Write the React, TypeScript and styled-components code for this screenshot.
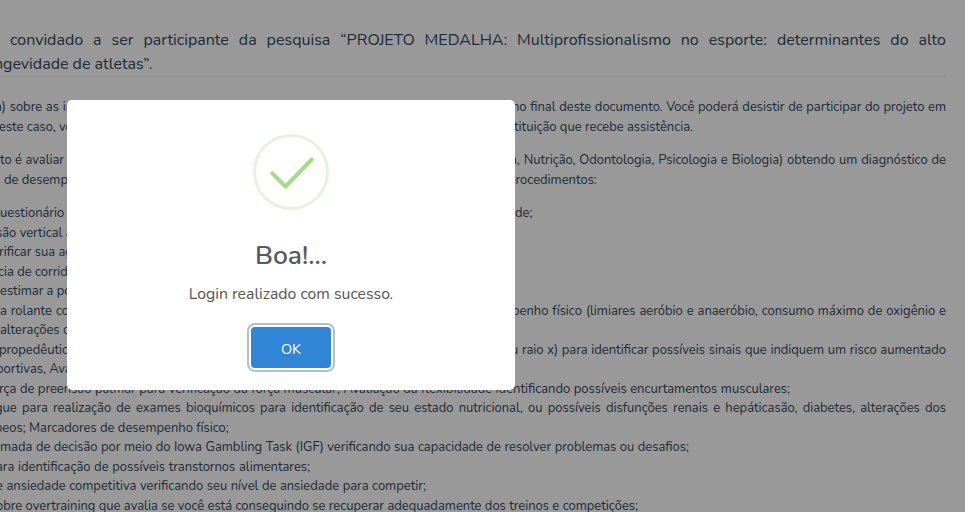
import React from "react";
import styled, { createGlobalStyle } from "styled-components";

const GlobalStyle = createGlobalStyle`
  html, body { margin: 0; height: 512px; overflow: hidden; background: #fff; }
  body { font-family: Nunito, Lato, sans-serif; color: #34495e; }
  * { box-sizing: border-box; }
`;

const Page = styled.main`
  width: 965px;
  height: 512px;
  padding-top: 28px;
  overflow: hidden;
`;

const Heading = styled.header`
  width: 946px;
  height: 49px;
  font-size: 16px;
  line-height: 24px;
  border-bottom: 1px solid #f0f0f0;
`;

const Block = styled.section<{ $gap: number }>`
  margin-top: ${(p) => p.$gap}px;
  font-size: 12.96px;
  line-height: 19.5px;
`;

const Line = styled.div`
  display: flex;
  height: 1lh;
`;

const Run = styled.span<{ $indent: number; $width: number }>`
  flex: none;
  margin-left: ${(p) => p.$indent}px;
  width: ${(p) => p.$width}px;
  white-space: nowrap;
  text-align: justify;
  text-align-last: justify;
`;

const Backdrop = styled.div`
  position: fixed;
  inset: 0;
  display: flex;
  align-items: flex-start;
  padding: 100px 0 0 67px;
  background: rgba(0, 0, 0, 0.4);
`;

const Dialog = styled.div`
  display: flex;
  flex-direction: column;
  align-items: center;
  width: 448px;
  height: 290px;
  padding-top: 34px;
  border-radius: 5px;
  background: #fff;
`;

const SuccessMark = styled.svg`
  display: block;
  width: 76px;
  height: 76px;
`;

const Title = styled.h2`
  margin: 28px 0 0;
  font-size: 26.4px;
  line-height: 34px;
  font-weight: 600;
  color: #595959;
`;

const Message = styled.p`
  margin: 10px 0 0;
  font-size: 15.8px;
  line-height: 24px;
  color: #545454;
`;

const Confirm = styled.button`
  width: 80px;
  height: 41px;
  margin-top: 21px;
  padding: 2px 0 0;
  border: 0;
  border-radius: 4px;
  background: #3085d6;
  box-shadow: 0 0 0 2px #fff, 0 0 0 4px rgba(50, 100, 150, 0.4);
  color: #fff;
  font: 14.5px Nunito, Lato, sans-serif;
`;

type Segment = [start: number, end: number, text: string];

const heading: Segment[][] = [
  [[10, 946, "convidado a ser participante da pesquisa “PROJETO MEDALHA: Multiprofissionalismo no esporte: determinantes do alto"]],
  [[-6, 152, "ngevidade de atletas”."]],
];

const intro: Segment[][] = [
  [[-5, 73, "a) sobre as in"], [512, 946, "no final deste documento. Você poderá desistir de participar do projeto em"]],
  [[-1, 71, "este caso, vo"], [514, 693, "tituição que recebe assistência."]],
];

const goal: Segment[][] = [
  [[0, 64, "to é avaliar"], [510, 946, "a, Nutrição, Odontologia, Psicologia e Biologia) obtendo um diagnóstico de"]],
  [[4, 67, "de desemp"], [508, 597, "procedimentos:"]],
];

const procedures: Segment[][] = [
  [[0, 63, "uestionário"], [515, 532, "de;"]],
  [[-4, 72, "são vertical a"]],
  [[-1, 69, "rificar sua ag"]],
  [[-2, 67, "cia de corrid"]],
  [[0, 71, "estimar a po"]],
  [[0, 69, "a rolante co"], [512, 946, "penho físico (limiares aeróbio e anaeróbio, consumo máximo de oxigênio e"]],
  [[0, 69, "alterações c"]],
  [[-1, 67, "propedêutic"], [511, 946, "u raio x) para identificar possíveis sinais que indiquem um risco aumentado"]],
  [[-4, 69, "portivas, Ava"]],
  [[-1, 790, "rça de preensão palmar para verificação da força muscular; Avaliação da flexibilidade identificando possíveis encurtamentos musculares;"]],
  [[-5, 946, "gue para realização de exames bioquímicos para identificação de seu estado nutricional, ou possíveis disfunções renais e hepáticasão, diabetes, alterações dos"]],
  [[-5, 228, "neos; Marcadores de desempenho físico;"]],
  [[0, 689, "mada de decisão por meio do Iowa Gambling Task (IGF) verificando sua capacidade de resolver problemas ou desafios;"]],
  [[-4, 310, "ara identificação de possíveis transtornos alimentares;"]],
  [[-4, 426, "e ansiedade competitiva verificando seu nível de ansiedade para competir;"]],
  [[-4, 638, "obre overtraining que avalia se você está conseguindo se recuperar adequadamente dos treinos e competições;"]],
];

function Lines({ rows }: { rows: Segment[][] }) {
  return (
    <>
      {rows.map((row, i) => (
        <Line key={i}>
          {row.map(([start, end, text], j) => (
            <Run key={j} $indent={start - (j ? row[j - 1][1] : 0)} $width={end - start}>
              {text}
            </Run>
          ))}
        </Line>
      ))}
    </>
  );
}

export default function App() {
  return (
    <>
      <GlobalStyle />
      <Page>
        <Heading><Lines rows={heading} /></Heading>
        <Block $gap={21}><Lines rows={intro} /></Block>
        <Block $gap={14}><Lines rows={goal} /></Block>
        <Block $gap={14}><Lines rows={procedures} /></Block>
      </Page>
      <Backdrop>
        <Dialog role="dialog" aria-modal="true">
          <SuccessMark viewBox="0 0 76 76" fill="none" aria-hidden="true">
            <circle cx="38" cy="38" r="36.5" stroke="#a5dc86" strokeOpacity="0.3" strokeWidth="3" />
            <path d="M19.3 39.3 32.5 52.5 58.7 25.5" stroke="#a5dc86" strokeWidth="4" strokeLinecap="round" strokeLinejoin="round" />
          </SuccessMark>
          <Title>Boa!...</Title>
          <Message>Login realizado com sucesso.</Message>
          <Confirm>OK</Confirm>
        </Dialog>
      </Backdrop>
    </>
  );
}
